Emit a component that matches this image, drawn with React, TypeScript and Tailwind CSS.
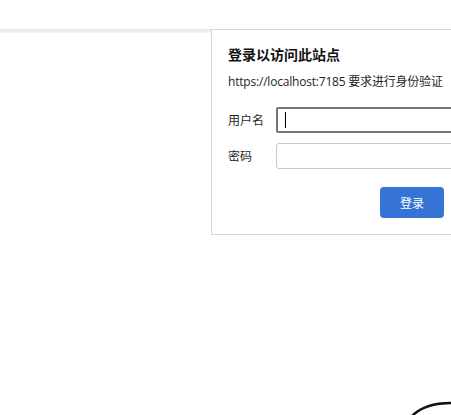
import React from "react";

export default function App() {
  const font = {
    fontFamily: '"Open Sans", "Noto Sans CJK SC", sans-serif',
  };
  return (
    <div
      className="relative w-[451px] h-[415px] overflow-hidden bg-white text-[#1f1f1f]"
      style={font}
    >
      <div className="mt-[29px] h-[4px] w-full bg-gradient-to-b from-[#e6e6e6] to-[#f6f6f6]" />

      <div className="absolute left-[211px] top-[29px] w-[300px] border border-[#d6d6d6] bg-white pl-[16px] pt-[14px] pb-[16px]">
        <div
          className="text-[14px] leading-[20px] font-bold text-[#111]"
          style={{ fontFamily: '"Noto Sans CJK SC", sans-serif' }}
        >
          登录以访问此站点
        </div>
        <div className="mt-[9px] text-[12px] leading-[18px] whitespace-nowrap tracking-[-0.2px]">
          https://localhost:7185 要求进行身份验证
        </div>

        <div className="mt-[16px] flex items-center">
          <div
            className="w-[48px] text-[12px] leading-[18px]"
            style={{ fontFamily: '"Noto Sans CJK SC", sans-serif' }}
          >
            用户名
          </div>
          <div className="flex h-[26px] w-[200px] items-center rounded-[2px] border-2 border-[#767676] pl-[7px]">
            <div className="h-[16px] w-[1px] bg-black" />
          </div>
        </div>

        <div className="mt-[10px] flex items-center">
          <div
            className="w-[48px] text-[12px] leading-[18px]"
            style={{ fontFamily: '"Noto Sans CJK SC", sans-serif' }}
          >
            密码
          </div>
          <div className="h-[26px] w-[200px] rounded-[3px] border border-[#c9c9c9]" />
        </div>

        <div className="mt-[18px] flex">
          <button
            className="ml-[152px] h-[31px] w-[64px] rounded-[4px] bg-[#3574d4] text-[12px] text-white"
            style={{ fontFamily: '"Noto Sans CJK SC", sans-serif' }}
          >
            登录
          </button>
        </div>
      </div>

      <svg
        className="absolute left-0 top-0"
        width="451"
        height="415"
        viewBox="0 0 451 415"
        fill="none"
      >
        <path
          d="M411 417 Q424 403 451 403"
          stroke="#111"
          strokeWidth="2.5"
          strokeLinecap="round"
        />
      </svg>
    </div>
  );
}
